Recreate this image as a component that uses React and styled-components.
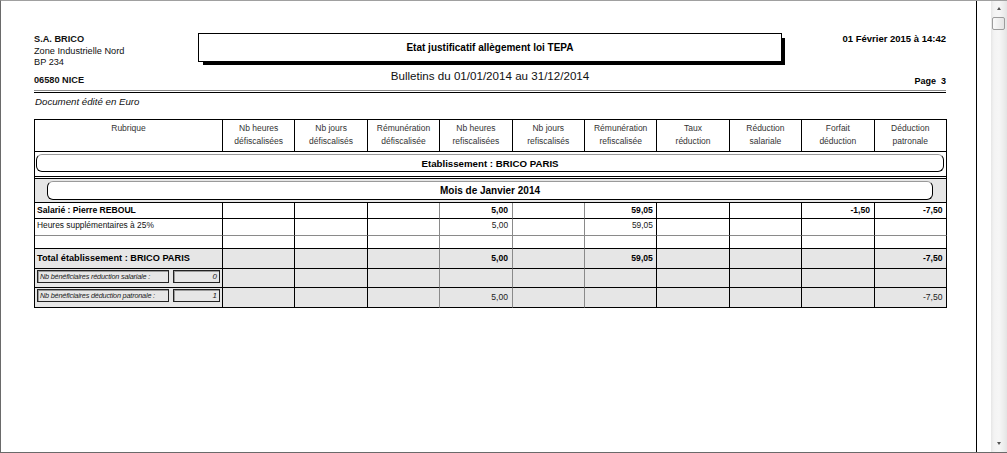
import React from 'react';
import styled, { createGlobalStyle } from 'styled-components';

const GlobalStyle = createGlobalStyle`
  html, body {
    margin: 0;
    padding: 0;
    overflow: hidden;
    background: #fff;
  }
  body {
    font-family: "Liberation Sans", Arial, sans-serif;
    color: #000;
  }
`;

const Window = styled.div`
  width: 1007px;
  height: 453px;
  box-sizing: border-box;
  border-top: 1px solid #a0a0a0;
  border-left: 1px solid #6a6a6a;
  border-bottom: 1px solid #6a6a6a;
  display: flex;
  background: #fff;
  overflow: hidden;
`;

const Sheet = styled.div`
  width: 976px;
  flex: none;
  box-sizing: border-box;
  border-right: 1px solid #000;
  padding: 32px 0 0 33px;
`;

const Gutter = styled.div`
  width: 14px;
  flex: none;
`;

const ScrollBar = styled.div`
  width: 16px;
  flex: none;
  position: relative;
  background: linear-gradient(to right, #e6e6e6 0, #f3f3f3 3px, #f6f6f6 8px, #ececec 13px, #e4e4e4 16px);
`;

const Arrow = styled.div`
  position: absolute;
  left: 6px;
  ${p => (p.$down ? 'bottom: 7px;' : 'top: 6px;')}
  width: 0;
  height: 0;
  border-left: 2.5px solid transparent;
  border-right: 2.5px solid transparent;
  ${p => (p.$down ? 'border-top: 3px solid #555;' : 'border-bottom: 3px solid #555;')}
`;

const Thumb = styled.div`
  position: absolute;
  top: 16px;
  left: 1px;
  width: 13px;
  height: 13px;
  box-sizing: border-box;
  border: 1px solid #9c9c9c;
  border-radius: 2px;
  background: linear-gradient(to right, #fafafa, #e4e4e4);
`;

const Content = styled.div`
  width: 913px;
`;

const Header = styled.div`
  display: flex;
  height: 57px;
`;

const Sender = styled.div`
  width: 164px;
  flex: none;
  font-size: 9.2px;
  line-height: 11.5px;
  padding-top: 1px;
`;

const SenderLine = styled.div`
  font-weight: ${p => (p.$bold ? 700 : 400)};
  margin-top: ${p => p.$gap || 0}px;
  color: #111;
`;

const TitleColumn = styled.div`
  width: 584px;
  flex: none;
  display: flex;
  flex-direction: column;
  align-items: center;
`;

const TitleBox = styled.div`
  width: 584px;
  height: 29px;
  box-sizing: border-box;
  border: 1px solid #000;
  box-shadow: 4px 4px 0 -1px #000;
  display: flex;
  align-items: center;
  justify-content: center;
  font-size: 10px;
  font-weight: 700;
`;

const Period = styled.div`
  margin-top: 7px;
  font-size: 11.6px;
  line-height: 14px;
  color: #111;
`;

const Stamp = styled.div`
  flex: 1;
  text-align: right;
  font-weight: 700;
  padding-right: 1px;
`;

const StampLine = styled.div`
  font-size: ${p => p.$size}px;
  line-height: 12px;
  margin-top: ${p => p.$gap || 0}px;
  white-space: pre;
`;

const DoubleRule = styled.div`
  width: 912px;
  height: 1px;
  border-top: 1px solid #8c8c8c;
  border-bottom: 1px solid #000;
`;

const CurrencyNote = styled.div`
  margin: 3px 0 11px 1px;
  font-size: 9.7px;
  line-height: 12px;
  font-style: italic;
  color: #111;
`;

const Grid = styled.table`
  width: 913px;
  table-layout: fixed;
  border-collapse: separate;
  border-spacing: 0;
  border-top: 1px solid #000;
  border-left: 1px solid #000;
`;

const Row = styled.tr`
  height: ${p => p.$h}px;
  background: ${p => (p.$shaded ? '#e6e6e6' : '#fff')};
`;

const HeadCell = styled.th`
  padding: 2px 2px 0;
  border-right: 1px solid #000;
  border-bottom: 1px solid #000;
  vertical-align: top;
  text-align: center;
  font-size: 8.5px;
  line-height: 13px;
  font-weight: 400;
  color: #333;
  white-space: nowrap;
  overflow: hidden;
`;

const Cell = styled.td`
  padding: ${p => p.$pad || '0 3.5px 0 3px'};
  border-right: 1px solid ${p => (p.$softRight ? '#8a8a8a' : '#000')};
  border-bottom: ${p => p.$bottom || '1px solid #000'};
  text-align: ${p => p.$align || 'left'};
  vertical-align: ${p => p.$valign || 'middle'};
  font-size: ${p => p.$size || 8.6}px;
  font-weight: ${p => (p.$bold ? 700 : 400)};
  color: ${p => p.$color || '#000'};
  line-height: 11px;
  white-space: nowrap;
  overflow: hidden;
`;

const Banner = styled.div`
  height: ${p => p.$h}px;
  box-sizing: border-box;
  border: 1px solid #000;
  border-top-color: #9a9a9a;
  border-radius: 6px;
  background: #fff;
  display: flex;
  align-items: center;
  justify-content: center;
  font-size: ${p => p.$size}px;
  font-weight: 700;
`;

const CountLine = styled.div`
  display: flex;
  gap: 4px;
  margin-left: 1px;
`;

const CountBox = styled.div`
  width: ${p => p.$w}px;
  height: 13px;
  box-sizing: border-box;
  border: 1px solid #222;
  box-shadow: inset 1px 1px 0 #9a9a9a;
  font-style: italic;
  font-size: ${p => p.$size}px;
  line-height: 11px;
  padding: 0 2px;
  text-align: ${p => p.$align || 'left'};
  letter-spacing: ${p => p.$spacing || 0}px;
  color: #222;
  overflow: hidden;
  white-space: nowrap;
`;

const columns = [
  ['Rubrique'],
  ['Nb heures', 'défiscalisées'],
  ['Nb jours', 'défiscalisés'],
  ['Rémunération', 'défiscalisée'],
  ['Nb heures', 'refiscalisées'],
  ['Nb jours', 'refiscalisés'],
  ['Rémunération', 'refiscalisée'],
  ['Taux', 'réduction'],
  ['Réduction', 'salariale'],
  ['Forfait', 'déduction'],
  ['Déduction', 'patronale'],
];

const rows = [
  { id: 'salarie', h: 16, label: 'Salarié : Pierre REBOUL', bold: true, values: { 4: '5,00', 6: '59,05', 9: '-1,50', 10: '-7,50' } },
  { id: 'heures', h: 17, label: 'Heures supplémentaires à 25%', size: 8.4, top: true, soft: true, values: { 4: '5,00', 6: '59,05' } },
  { id: 'vide', h: 13, values: {} },
  { id: 'total', h: 20, label: 'Total établissement : BRICO PARIS', bold: true, labelSize: 9.2, shaded: true, values: { 4: '5,00', 6: '59,05', 10: '-7,50' } },
  { id: 'nb-sal', h: 19, count: ['Nb bénéficiaires réduction salariale :', '0'], shaded: true, values: {} },
  { id: 'nb-pat', h: 20, count: ['Nb bénéficiaires déduction patronale :', '1'], shaded: true, values: { 4: '5,00', 10: '-7,50' } },
];

const softColumns = [3, 4, 5];

const DataRow = ({ row }) => (
  <Row $h={row.h} $shaded={row.shaded}>
    {row.count ? (
      <Cell $valign="top" $pad="1px 0 0 1px">
        <CountLine>
          <CountBox $w={132} $size={7.3} $spacing={-0.2}>{row.count[0]}</CountBox>
          <CountBox $w={47} $size={8} $align="right">{row.count[1]}</CountBox>
        </CountLine>
      </Cell>
    ) : (
      <Cell
        $bold={row.bold}
        $size={row.labelSize || row.size || 8.6}
        $valign={row.top ? 'top' : 'middle'}
        $pad={row.top ? '1px 3px 0 2px' : '0 3px 0 2px'}
        $bottom={row.soft ? '1px solid #8a8a8a' : undefined}
        $color={row.bold ? '#000' : '#111'}
      >
        {row.label}
      </Cell>
    )}
    {columns.slice(1).map((_, i) => {
      const idx = i + 1;
      return (
        <Cell
          key={idx}
          $align="right"
          $bold={row.bold}
          $size={row.size || 8.6}
          $valign={row.top ? 'top' : 'middle'}
          $pad={row.top ? '1px 3.5px 0 3px' : undefined}
          $softRight={softColumns.includes(idx)}
          $bottom={row.soft ? '1px solid #8a8a8a' : undefined}
          $color={row.bold ? '#000' : '#222'}
        >
          {row.values[idx] || ''}
        </Cell>
      );
    })}
  </Row>
);

export default function App() {
  return (
    <>
      <GlobalStyle />
      <Window>
        <Sheet>
          <Content>
            <Header>
              <Sender>
                <SenderLine $bold>S.A. BRICO</SenderLine>
                <SenderLine>Zone Industrielle Nord</SenderLine>
                <SenderLine>BP 234</SenderLine>
                <SenderLine $bold $gap={6}>06580 NICE</SenderLine>
              </Sender>
              <TitleColumn>
                <TitleBox>Etat justificatif allègement loi TEPA</TitleBox>
                <Period>Bulletins du 01/01/2014 au 31/12/2014</Period>
              </TitleColumn>
              <Stamp>
                <StampLine $size={9.5}>01 Février 2015 à 14:42</StampLine>
                <StampLine $size={9} $gap={30}>{'Page  3'}</StampLine>
              </Stamp>
            </Header>
            <DoubleRule />
            <CurrencyNote>Document édité en Euro</CurrencyNote>
            <Grid>
              <colgroup>
                <col style={{ width: 188 }} />
                {columns.slice(1).map((_, i) => (
                  <col key={i} />
                ))}
              </colgroup>
              <thead>
                <Row $h={32}>
                  {columns.map((lines, i) => (
                    <HeadCell key={i}>
                      {lines.map(l => (
                        <div key={l}>{l}</div>
                      ))}
                    </HeadCell>
                  ))}
                </Row>
              </thead>
              <tbody>
                <Row $h={27}>
                  <Cell colSpan={11} $valign="top" $pad="2px 2px 0 1px" $bottom="3px double #000">
                    <Banner $h={18} $size={9.7}>
                      Etablissement : BRICO PARIS
                    </Banner>
                  </Cell>
                </Row>
                <Row $h={24} $shaded>
                  <Cell colSpan={11} $valign="top" $pad="2px 13px 0 12px">
                    <Banner $h={19} $size={10}>
                      Mois de Janvier 2014
                    </Banner>
                  </Cell>
                </Row>
                {rows.map(row => (
                  <DataRow key={row.id} row={row} />
                ))}
              </tbody>
            </Grid>
          </Content>
        </Sheet>
        <Gutter />
        <ScrollBar>
          <Arrow />
          <Thumb />
          <Arrow $down />
        </ScrollBar>
      </Window>
    </>
  );
}
